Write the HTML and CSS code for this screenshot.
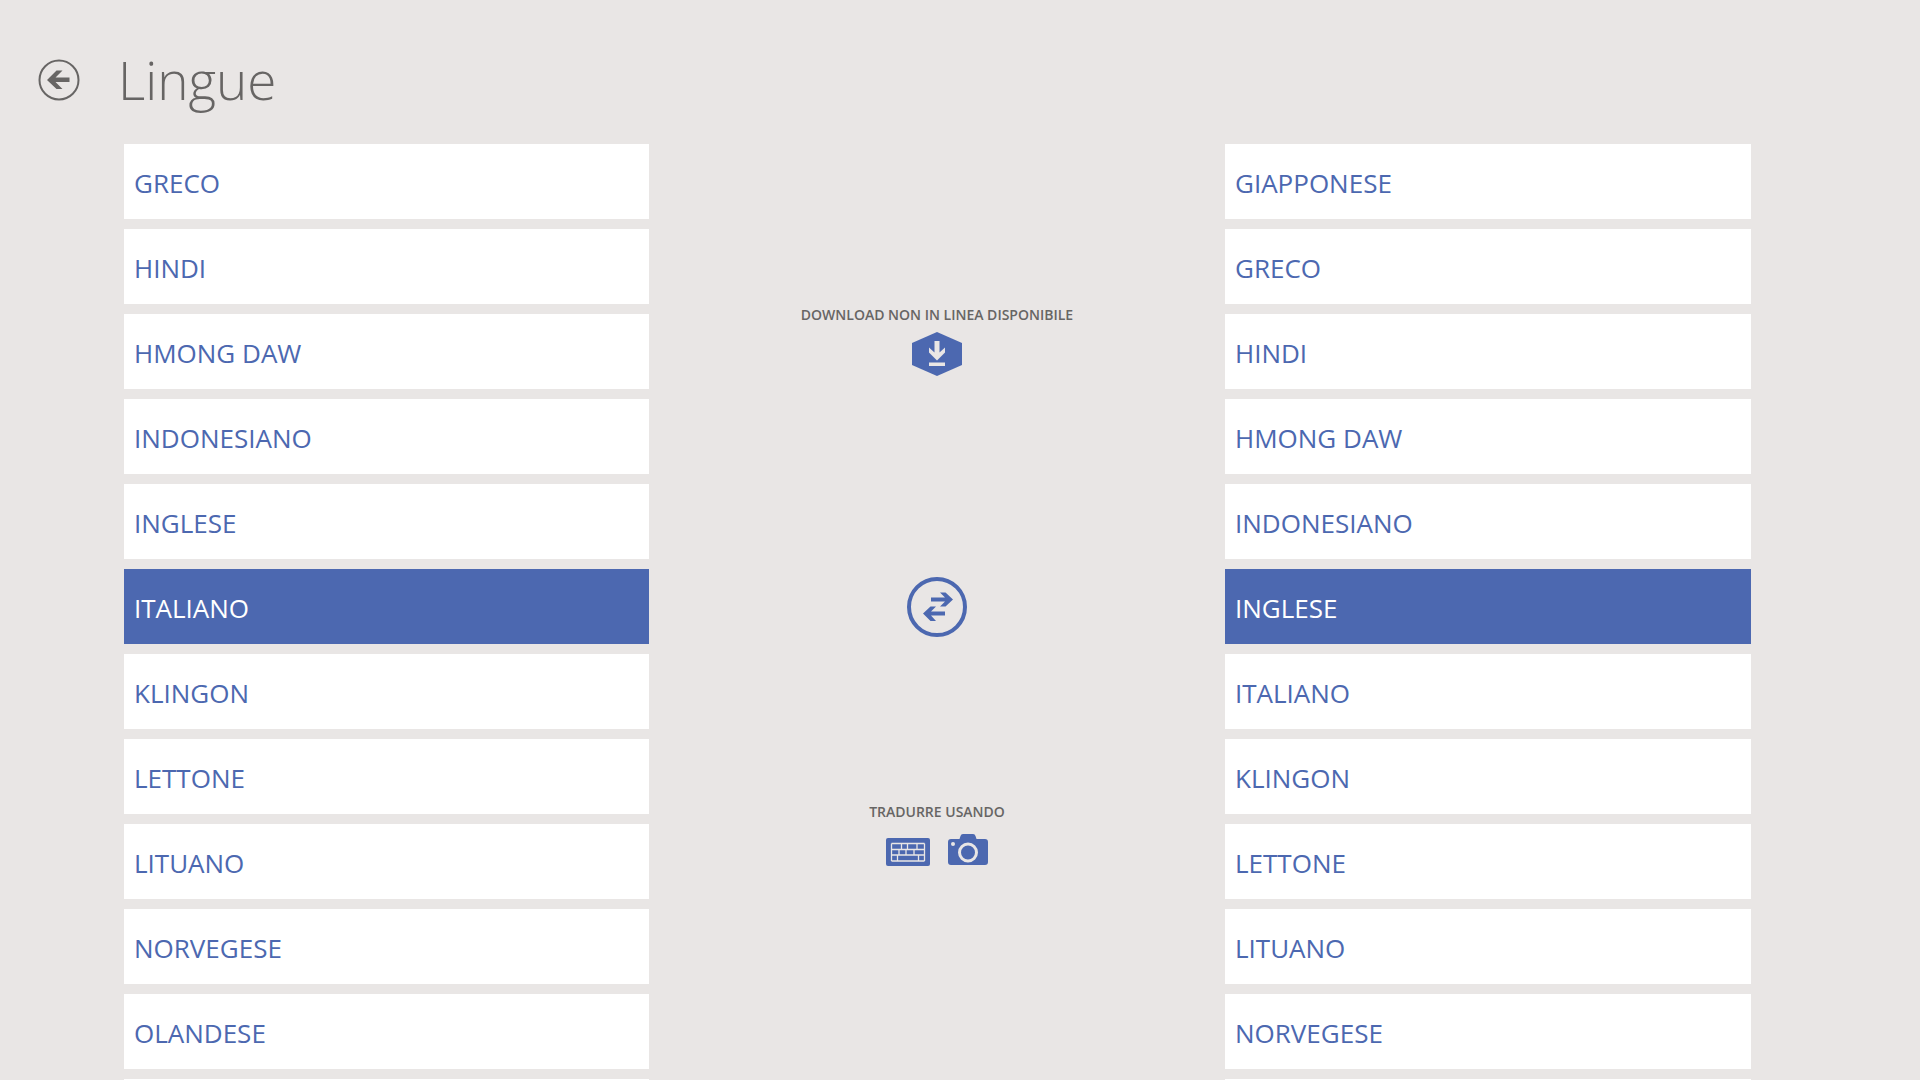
FILE: index.html
```html
<!DOCTYPE html>
<html lang="it">
<head>
  <meta charset="UTF-8">
  <meta name="viewport" content="width=device-width, initial-scale=1.0">
  <title>Lingue</title>
  <link rel="stylesheet" href="styles.css">
</head>
<body>
  <header class="header">
    <button class="icon-button" type="button" aria-label="Indietro">
      <svg width="42" height="42" viewBox="0 0 42 42">
        <circle cx="21" cy="21" r="19.5" fill="none" stroke="#676564" stroke-width="2"/>
        <path d="M9 21L18.500 11.500H24.500L17.500 18.500H31.500V23H17.500L24.500 30H18.500Z" fill="#676564"/>
      </svg>
    </button>
    <h1 class="title">Lingue</h1>
  </header>

  <main class="content">
    <ul class="languages" aria-label="Da">
      <li><button class="language" type="button">GRECO</button></li>
      <li><button class="language" type="button">HINDI</button></li>
      <li><button class="language" type="button">HMONG DAW</button></li>
      <li><button class="language" type="button">INDONESIANO</button></li>
      <li><button class="language" type="button">INGLESE</button></li>
      <li><button class="language language--selected" type="button" aria-pressed="true">ITALIANO</button></li>
      <li><button class="language" type="button">KLINGON</button></li>
      <li><button class="language" type="button">LETTONE</button></li>
      <li><button class="language" type="button">LITUANO</button></li>
      <li><button class="language" type="button">NORVEGESE</button></li>
      <li><button class="language" type="button">OLANDESE</button></li>
      <li><button class="language" type="button"></button></li>
    </ul>

    <div class="actions">
      <section class="action">
        <h2 class="action__label" id="download">DOWNLOAD NON IN LINEA DISPONIBILE</h2>
        <button class="icon-button" type="button" aria-labelledby="download">
          <svg width="50" height="44" viewBox="0 0 50 44">
            <path d="M25 0L50 11V33L25 44L0 33V11Z" fill="#4c68b0"/>
            <path d="M22.500 9H27.500V20.500L33 15.500V20.500L25 28.500L17 20.500V15.500L22.500 20.500ZM17 30.500H33V34H17Z" fill="#e9e6e5"/>
          </svg>
        </button>
      </section>

      <button class="icon-button icon-button--swap" type="button" aria-label="Scambia lingue">
        <svg width="60" height="60" viewBox="0 0 60 60">
          <circle cx="30" cy="30" r="28" fill="none" stroke="#4c68b0" stroke-width="4"/>
          <path d="M24 20.500H38L33 15.500H38.500L46 22.500L38.500 29.500H33L38 24.500H24Z" fill="#4c68b0"/>
          <path d="M38 34.500H24L29 29.500H23.500L16 36.500L23.500 44H29L24 38.500H38Z" fill="#4c68b0"/>
        </svg>
      </button>

      <section class="action">
        <h2 class="action__label">TRADURRE USANDO</h2>
        <div class="action__icons">
          <button class="icon-button" type="button" aria-label="Tastiera">
            <svg width="44" height="32" viewBox="0 0 44 32">
              <rect y="4" width="44" height="28" rx="2" fill="#4c68b0"/>
              <path d="M5.500 9.500H38.500M5.500 15.500H38.500M5.500 21H38.500M5.500 27H38.500M5.500 9.500V27M38.500 9.500V27M15.500 9.500V15M21.500 9.500V15M31 9.500V15M13 15.500V21M20 15.500V21M28 15.500V21M11.500 21V27M32.500 21V27" fill="none" stroke="#e9e6e5" stroke-width="1.300"/>
            </svg>
          </button>
          <button class="icon-button" type="button" aria-label="Fotocamera">
            <svg width="40" height="32" viewBox="0 0 40 32">
              <path d="M3 5H11.500L12.500 2Q13 0 15 0H25Q27 0 27.500 2L28.500 5H37Q40 5 40 8V28Q40 31 37 31H3Q0 31 0 28V8Q0 5 3 5Z" fill="#4c68b0"/>
              <circle cx="20" cy="18.500" r="8.500" fill="none" stroke="#e9e6e5" stroke-width="3"/>
              <circle cx="5" cy="10" r="2" fill="#e9e6e5"/>
            </svg>
          </button>
        </div>
      </section>
    </div>

    <ul class="languages" aria-label="A">
      <li><button class="language" type="button">GIAPPONESE</button></li>
      <li><button class="language" type="button">GRECO</button></li>
      <li><button class="language" type="button">HINDI</button></li>
      <li><button class="language" type="button">HMONG DAW</button></li>
      <li><button class="language" type="button">INDONESIANO</button></li>
      <li><button class="language language--selected" type="button" aria-pressed="true">INGLESE</button></li>
      <li><button class="language" type="button">ITALIANO</button></li>
      <li><button class="language" type="button">KLINGON</button></li>
      <li><button class="language" type="button">LETTONE</button></li>
      <li><button class="language" type="button">LITUANO</button></li>
      <li><button class="language" type="button">NORVEGESE</button></li>
      <li><button class="language" type="button"></button></li>
    </ul>
  </main>
</body>
</html>
```
FILE: styles.css
```css
* {
  margin: 0;
  padding: 0;
  box-sizing: border-box;
}

body {
  display: flex;
  flex-direction: column;
  height: 100vh;
  overflow: hidden;
  background: #e9e6e5;
  color: #676564;
  font-family: "Segoe UI", "Open Sans", "Noto Sans", sans-serif;
}

.header {
  display: flex;
  align-items: center;
  gap: 38px;
  flex: none;
  height: 144px;
  padding: 16px 38px 0;
}

.title {
  font-size: 53px;
  font-weight: 300;
  line-height: 72px;
}

.icon-button {
  display: block;
  border: none;
  background: none;
  cursor: pointer;
}

.icon-button svg {
  display: block;
}

.icon-button--swap {
  margin: 201px 0 164px;
}

.content {
  display: grid;
  grid-template-columns: 525fr 576fr 526fr;
  flex: 1;
  min-height: 0;
  padding: 0 169px 0 124px;
}

.languages {
  display: flex;
  flex-direction: column;
  gap: 10px;
  min-height: 0;
  overflow-y: auto;
  list-style: none;
  scrollbar-width: none;
}

.language {
  display: block;
  width: 100%;
  height: 75px;
  padding: 2px 10px 0;
  border: none;
  background: #ffffff;
  color: #4c68b0;
  font-family: inherit;
  font-size: 26px;
  text-align: left;
  cursor: pointer;
}

.language--selected {
  background: #4c68b0;
  color: #ffffff;
}

.actions {
  display: flex;
  flex-direction: column;
  align-items: center;
  padding-top: 160px;
}

.action {
  display: flex;
  flex-direction: column;
  align-items: center;
  gap: 6px;
}

.action__label {
  font-size: 14px;
  font-weight: 600;
  line-height: 22px;
}

.action__icons {
  display: flex;
  gap: 18px;
  padding-top: 5px;
}
```
